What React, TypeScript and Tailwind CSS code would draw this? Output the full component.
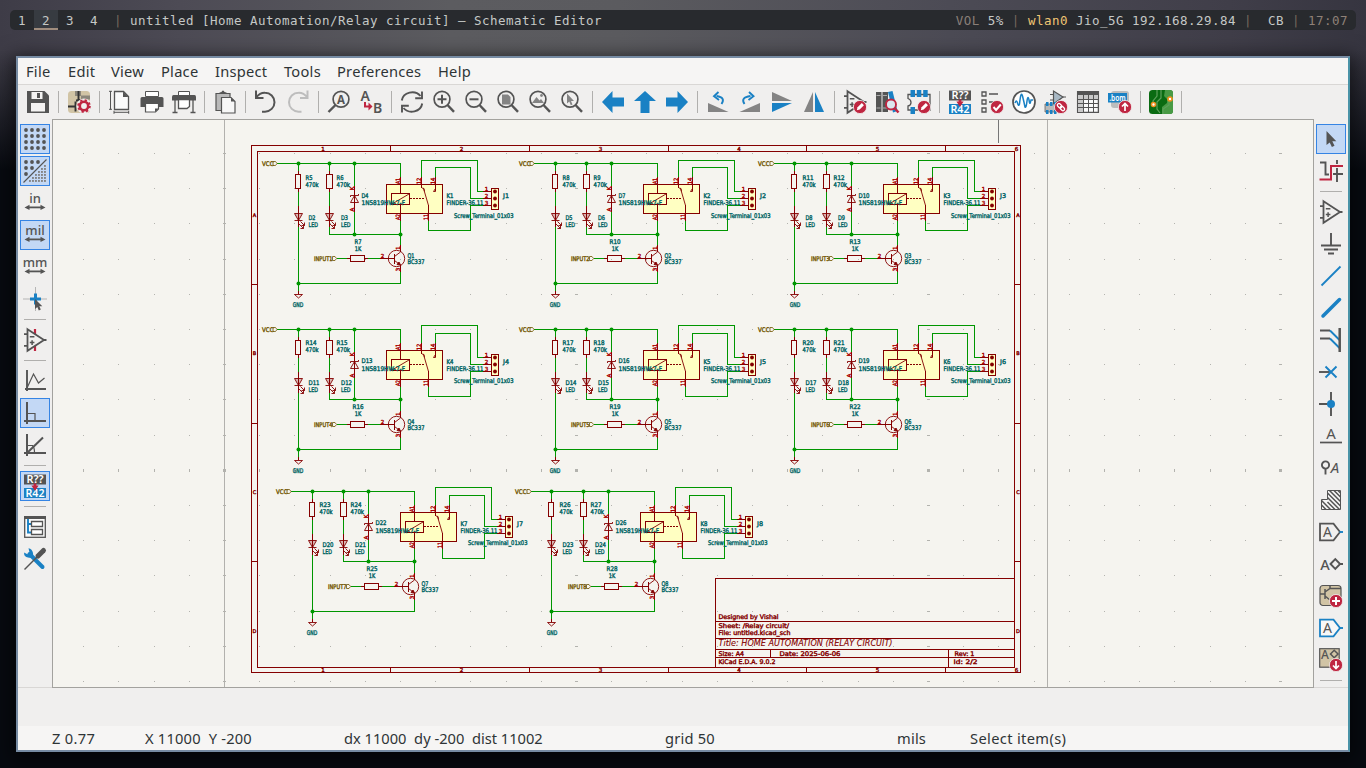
import React from "react";

const G = "#545454";
const LG = "#848484";
const B = "#1a81c4";
const R = "#bf2641";

type IconMap = Record<string, React.ReactNode>;

const lens = (
  <>
    <circle cx="10" cy="9.3" r="7.9" fill="none" stroke={G} strokeWidth="1.7" />
    <path d="M15.5 15 L22 21.8" stroke={G} strokeWidth="2.4" />
  </>
);

const badge = <circle cx="17" cy="17" r="6.6" fill={R} stroke="#f0efee" strokeWidth="0.8" />;
const pencil = <path d="M13.8 20.2 L14.6 17.3 L18.8 13.1 L20.9 15.2 L16.7 19.4 Z" fill="#fff" />;

const annotate = (
  <>
    <rect x="1" y="0.5" width="22" height="10" fill={G} />
    <text x="12" y="9" textAnchor="middle" fontSize="10" fontWeight="600" fill="#fff" textLength="17" lengthAdjust="spacingAndGlyphs">R??</text>
    <rect x="1" y="14" width="22" height="10" fill={B} />
    <text x="12" y="22.7" textAnchor="middle" fontSize="10" fontWeight="600" fill="#fff" textLength="19" lengthAdjust="spacingAndGlyphs">R42</text>
    <path d="M10.6 9.5h2.8v2h2.2L12 17 8.4 11.5h2.2z" fill={R} />
  </>
);

const opamp = (
  <>
    <path d="M4.5 1.2 L21 12 L4.5 22.8 Z M1 6.2h3.5 M1 17.8h3.5 M21 12h2.5" fill="none" stroke={G} strokeWidth="1.8" />
    <path d="M6.8 8.7h4.6 M6.8 14.6h4.6 M9.1 12.3v4.6" stroke={G} strokeWidth="1.5" />
  </>
);

const unit = (t: string) => (
  <>
    <text x="12" y="11.8" textAnchor="middle" fontSize="13" fontWeight="500" fill={G}>{t}</text>
    <path d="M4 16.4h16" stroke={G} strokeWidth="1.8" />
    <path d="M1.5 16.4l5-2.6v5.2zM22.500 16.4l-5-2.6v5.2z" fill={G} />
  </>
);

const hatch = "M2.500 12.500l9 9 M2.500 17l4.500 4.500 M8.500 14l7.500 7.500 M8.500 9.500l12 12 M8.500 5l13 13 M10.500 2.500l11 11 M15 2.500l6.500 6.500 M19 2.500l2.500 2.500";

const ICONS: IconMap = {
  save: (
    <>
      <path d="M1 1h17.500l4.500 4.500V23H1z" fill={G} />
      <path d="M5.500 2h11v7h-11z M5 13h14v8.500H5z" fill="#f4f3f2" />
      <path d="M11 3h3v5h-3z" fill={G} />
    </>
  ),
  setup: (
    <>
      <rect x="1" y="1" width="22" height="22" rx="3.500" fill="#d1c4a5" />
      <path d="M8 1h6v5H8z" fill="#8b867a" />
      <path d="M14 5.500h9v4h-9z" fill="#8b867a" />
      <path d="M1 16.500h8 M8.500 11.500v10 M9 10.500l8-.5 M11.500 10V1" stroke="#333" strokeWidth="1.900" />
      <circle cx="17" cy="16" r="7.600" fill="#f0efee" />
      <circle cx="17" cy="16" r="4.200" fill="none" stroke={R} strokeWidth="2.600" />
      <circle cx="17" cy="16" r="5.900" fill="none" stroke={R} strokeWidth="1.800" strokeDasharray="2.300 2.330" />
    </>
  ),
  page: (
    <>
      <path d="M6.500 1.500h9l5 5v13h-14z" fill="#fafafa" stroke={G} strokeWidth="1.300" />
      <path d="M15 1.500v5.500h5.500z" fill={G} />
      <path d="M2.500 1v18.500 M1 1.300h3 M1 19.300h3 M6 22.300h15 M6 20.800v3 M20.700 20.800v3" stroke={G} />
    </>
  ),
  print: (
    <>
      <path d="M5.500 1.500h13v5h-13z" fill="#fff" stroke={G} />
      <path d="M2 7h20q1.500 0 1.500 1.500V17H19v-4H5v4H.5V8.500Q.5 7 2 7z" fill={G} />
      <path d="M5.500 13.500h13v5.500l-3 3h-10z" fill="#fff" stroke={G} strokeWidth="1.200" />
      <path d="M15 22v-3.500h3.500z" fill={G} />
    </>
  ),
  plot: (
    <>
      <path d="M6.500 1.500h11v4h-11z" fill="#fff" stroke={G} />
      <path d="M1.500 5h21q1.500 0 1.500 2v3.500H0V7q0-2 1.500-2z" fill={G} />
      <path d="M3 10v12 M21 10v12 M.5 22.500h5 M18.500 22.500h5" stroke={G} strokeWidth="1.300" />
      <path d="M6.500 9.500h11v7l-2.500 2h-8.500z" fill="#fff" stroke={G} strokeWidth="1.300" />
    </>
  ),
  paste: (
    <>
      <path d="M3 3.500h14v17H3z" fill="#b9b9b9" stroke={G} strokeWidth="1.200" />
      <path d="M6 3.500q0-1.500 2.500-1.500 .5-1.500 1.500-1.500t1.500 1.500q2.500 0 2.500 1.500z" fill={G} />
      <path d="M8.500 7.500h9.500l4 4v11.500H8.500z" fill="#f7f7f7" stroke={G} strokeWidth="1.200" />
      <path d="M18 7.500v4h4z" fill={G} />
    </>
  ),
  undo: <path d="M2 .5v7.500h7.500 M2 7.500Q6 2.500 11 2.700a9.500 9.500 0 0 1 0 19H8" fill="none" stroke={G} strokeWidth="2" />,
  redo: <path d="M21.500 .5v7.500h-7.500 M21.500 7.500Q17.500 2.500 12.500 2.700a9.500 9.500 0 0 0 0 19H15.500" fill="none" stroke="#bdbdbd" strokeWidth="2" />,
  find: (
    <>
      <circle cx="14" cy="9.300" r="7.900" fill="none" stroke={G} strokeWidth="1.700" />
      <path d="M8.500 15 L1.500 22" stroke={G} strokeWidth="2.400" />
      <text x="14" y="13.500" textAnchor="middle" fontSize="11.500" fontWeight="700" fill={G}>A</text>
    </>
  ),
  replace: (
    <>
      <text x="6.300" y="10.500" textAnchor="middle" fontSize="14" fontWeight="600" fill={G}>A</text>
      <text x="18.500" y="22.500" textAnchor="middle" fontSize="14" fontWeight="600" fill={G}>B</text>
      <path d="M6 12v4.500h5" fill="none" stroke={R} strokeWidth="2" />
      <path d="M9.500 12.500l4 4-4 4z" fill={R} />
    </>
  ),
  refresh: (
    <>
      <path d="M1.800 10.500A10.500 9.500 0 0 1 20.500 6 M22.200 13.500A10.500 9.500 0 0 1 3.500 18" fill="none" stroke={G} strokeWidth="1.900" />
      <path d="M22 1.500v6.800h-6.800 M2 22.500v-6.800h6.800" fill="none" stroke={G} strokeWidth="1.900" />
    </>
  ),
  zin: <>{lens}<path d="M5.500 9.300h9 M10 4.800v9" stroke={G} strokeWidth="2" /></>,
  zout: <>{lens}<path d="M5.500 9.300h9" stroke={G} strokeWidth="2" /></>,
  zfit: <>{lens}<path d="M6 4.500h6l2.500 2.500v7.500H6z" fill={LG} /></>,
  zobj: <>{lens}<path d="M4 13l4.500-6 3 3.500 1.500-1.500 3 4z" fill={LG} /><circle cx="13.500" cy="5.500" r="1.400" fill={LG} /></>,
  zsel: <>{lens}<path d="M7 3.500v10l2.300-2 1.500 3.700 1.700-.7-1.500-3.500h3z" fill={LG} /></>,
  left: <path d="M1 12L11.500 1v6.500H23v9H11.500V23z" fill={B} />,
  up: <path d="M12 1l11 10h-6.500v12h-9V11H1z" fill={B} />,
  right: <path d="M23 12L12.500 1v6.500H1v9h11.500V23z" fill={B} />,
  ccw: (
    <>
      <path d="M2 13v9h20.500z" fill={LG} />
      <path d="M15.500 14q4.500-6.500-5-8" fill="none" stroke={B} strokeWidth="1.900" />
      <path d="M12.500 2L8 6.200l5 3.800" fill="none" stroke={B} strokeWidth="1.900" />
    </>
  ),
  cw: (
    <>
      <path d="M22 13v9H1.500z" fill={LG} />
      <path d="M6.500 14q-4.500-6.500 6-8" fill="none" stroke={B} strokeWidth="1.900" />
      <path d="M11 2l4.500 4.200-5 3.800" fill="none" stroke={B} strokeWidth="1.900" />
    </>
  ),
  mv: <><path d="M2 2l20 9H2z" fill={LG} /><path d="M2 22l20-9H2z" fill={B} /></>,
  mh: <><path d="M11 2L2 22h9z" fill={LG} /><path d="M13 2l9 20h-9z" fill={B} /></>,
  symed: <>{opamp}{badge}{pencil}</>,
  lib: (
    <>
      <path d="M1 2h5.500v20H1z M7.500 2h5.500v20H7.500z" fill={G} />
      <path d="M1.500 5.500h4 M1.500 18h4 M8 5.500h4 M8 18h4" stroke="#aaa" />
      <path d="M13 2l4.500-1 5 20-4.500 1.500z" fill={B} />
      <circle cx="16" cy="14.500" r="5" fill="#dbe6ee" stroke={R} strokeWidth="1.900" />
      <path d="M19.500 18l4 4.500" stroke={R} strokeWidth="2.500" />
    </>
  ),
  fped: (
    <>
      <path d="M1 4.500h22v15.500H1v-4q3-.5 3-3.500T1 8.500z" fill="none" stroke={G} strokeWidth="1.300" />
      <path d="M3.500 0h4.500v7H3.500z M9.800 0h4.500v7H9.800z M16.200 0h4.500v7h-4.500z M3.500 17h4.500v7H3.500z" fill={B} />
      {badge}{pencil}
    </>
  ),
  annot: annotate,
  erc: (
    <>
      <path d="M2 2h4v4H2z M2 10h4v4H2z M2 18h4v4H2z M9 4h9 M9 12h5" fill="none" stroke={G} strokeWidth="1.300" />
      {badge}<path d="M13.500 17l2.600 3 4.700-5.500" fill="none" stroke="#fff" strokeWidth="2" />
    </>
  ),
  sim: (
    <>
      <circle cx="12" cy="12" r="11" fill="#fff" stroke={G} strokeWidth="1.700" />
      <path d="M3 13q1.500-4 2.500 0 1 4 2 1 1.500-14 3-8t2.500 11q1.200 1.500 2-6 1-7 2.200 0 .8 5 1.800-1h2" fill="none" stroke={B} strokeWidth="1.500" />
    </>
  ),
  assign: (
    <>
      <path d="M9.500 1v13L19 7z" fill="#a8b8c4" stroke={G} strokeWidth="1.200" />
      <path d="M6 4.500h3 M6 10h3 M19 7h3" stroke={G} />
      <path d="M1 14h13v8H1z" fill="#b9b9b9" stroke={G} strokeWidth=".7" />
      <path d="M2 12h2.500v4H2z M6 12h2.500v4H6z M10 12h2.500v4H10z M2 20h2.500v4H2z M6 20h2.500v4H6z M10 20h2.500v4H10z" fill={B} />
      {badge}
      <g transform="rotate(45 17 17)" fill="none" stroke="#fff" strokeWidth="1.300">
        <rect x="12.600" y="15.500" width="5" height="3.200" rx="1.600" />
        <rect x="16.500" y="15.500" width="5" height="3.200" rx="1.600" />
      </g>
    </>
  ),
  table: (
    <>
      <path d="M1.600 1.600h20.800v20.800H1.600z" fill="#fafafa" stroke={G} strokeWidth="1.300" />
      <path d="M2 5h20v4.500H2z M2 5h5.500v17H2z" fill="#c9c9c9" />
      <path d="M1.500 1.500h21v3.500h-21z" fill={G} />
      <path d="M2 9.500h20 M2 13.500h20 M2 17.500h20 M7.500 5v17 M12.500 5v17 M17.500 5v17" stroke={G} shapeRendering="crispEdges" />
    </>
  ),
  bom: (
    <>
      <rect x="3" y="1" width="18" height="17" rx="3" fill="#bdbdbd" />
      <path d="M0 3h19v9.500H0z" fill={B} />
      <text x="9.500" y="10.800" textAnchor="middle" fontSize="8.500" fontWeight="600" fill="#fff" textLength="16.500" lengthAdjust="spacingAndGlyphs">.bom</text>
      {badge}<path d="M17 21v-7 M14 16.500l3-3 3 3" fill="none" stroke="#fff" strokeWidth="1.700" />
    </>
  ),
  pcb: (
    <>
      <rect x="0" y="0" width="24" height="24" rx="3.500" fill="#0a6b12" />
      <path d="M16 0h5q3 0 3 3v18q0 3-3 3h-8v-7l5-4V9l-3-3z" fill="#489a45" />
      <path d="M8 0v6l-4 5v4 M12 0v8l-4 4v7l3 4 M20 10v5l-6 4v5" fill="none" stroke="#5ca05a" strokeWidth="1.200" />
      <circle cx="21" cy="9" r="2" fill="#fff" stroke="#f0901e" strokeWidth="1.600" />
      <circle cx="4.500" cy="14.500" r="2" fill="#fff" stroke="#f0901e" strokeWidth="1.600" />
    </>
  ),
  grid: <>{[3, 9, 15, 21].map((y) => [3, 9, 15, 21].map((x) => <circle key={`${x}-${y}`} cx={x} cy={y} r="1.900" fill={G} />))}</>,
  gridov: (
    <>
      {[[3, 3], [9, 3], [15, 3], [3, 9], [9, 9], [3, 15]].map(([x, y]) => <circle key={`${x}-${y}`} cx={x} cy={y} r="1.900" fill={G} />)}
      {[7, 10, 13, 16, 19, 22].map((y, r) =>
        [22, 19, 16, 13, 10, 7].slice(0, r + 1).map((x) => <rect key={`${x}-${y}`} x={x - 1} y={y - 1} width="1.900" height="1.900" fill={LG} />)
      )}
      <path d="M.5 23.500L23.500.5" stroke={G} strokeWidth="1.100" />
    </>
  ),
  in: unit("in"),
  mil: unit("mil"),
  mm: unit("mm"),
  cursor: (
    <>
      <path d="M12.500 0v24 M0 12h24" stroke="#b5b5b5" />
      <path d="M12.500 6.500v11 M7 12h11" stroke={B} strokeWidth="3" />
      <path d="M12 12v10l2.300-2 1.500 3.500 2-1-1.500-3.300h3z" fill={G} />
    </>
  ),
  hidden: <><path d="M12 1v5 M12 18v5" stroke={R} strokeWidth="2.200" />{opamp}</>,
  free: (
    <>
      <path d="M4 1v21 M2 20h21" stroke={G} strokeWidth="1.900" />
      <path d="M4 19l6.500-14 5 9 6-5" fill="none" stroke={G} strokeWidth="1.200" />
    </>
  ),
  ortho: (
    <>
      <path d="M4 1v22 M1 20h22" stroke={G} strokeWidth="2" />
      <path d="M4.500 12.500h7.500v7.500" fill="none" stroke={G} strokeWidth="1.200" />
    </>
  ),
  diag: (
    <>
      <path d="M4 1v22 M1 20h22" stroke={G} strokeWidth="2" />
      <path d="M4.500 12.500h5q2 2 2 7" fill="none" stroke={G} strokeWidth="1.200" />
      <path d="M3 21L20 4.500" stroke={G} strokeWidth="2" />
    </>
  ),
  tree: (
    <>
      <rect x="1.700" y="1.700" width="20.600" height="20.600" fill="#fafafa" stroke={G} strokeWidth="1.300" />
      <path d="M1 1h22v3H1z" fill={G} />
      <path d="M5 4v13.500h3 M5 9h3" fill="none" stroke={B} strokeWidth="1.900" />
      <path d="M8.500 6.500h11v5h-11z M8.500 14.500h11v5h-11z" fill="#fff" stroke={G} strokeWidth="1.300" />
    </>
  ),
  tools: (
    <>
      <path d="M6.500 7L19.500 20" stroke={B} strokeWidth="4" strokeLinecap="round" />
      <path d="M5.500 1.200l1 4.300-2 1.800L1 5.500Q1 10 5 10.500q6 1.500 5-4.500-.8-4-4.500-4.800z" fill={B} />
      <path d="M1.500 22.500L15 9" stroke={G} strokeWidth="1.400" />
      <path d="M15 9L20.500 3.500" stroke={G} strokeWidth="5" strokeLinecap="round" />
    </>
  ),
  arrow: <path d="M7.500 4v14l3.200-2.600 2.200 4.600 2.600-1.300-2.200-4.400h4z" fill={G} />,
  hilite: (
    <>
      <path d="M1 3.500h5.500v12h5 M13 15h11 M18 1v22" fill="none" stroke={G} strokeWidth="1.900" />
      <path d="M.5 20h11.500v-13H24" fill="none" stroke="#f0efee" strokeWidth="4" />
      <path d="M.5 20.500h11.500V7H24" fill="none" stroke={R} strokeWidth="2" />
    </>
  ),
  opamp,
  gnd: <path d="M12 1v12 M2 13.500h20 M5 17.500h14 M9 21.500h6" stroke={G} strokeWidth="1.900" />,
  wire: <path d="M2.500 21.500L21.500 2.500" stroke={B} strokeWidth="1.800" />,
  bus: <path d="M4 20L20.500 3.500" stroke={B} strokeWidth="3.500" strokeLinecap="round" />,
  entry: (
    <>
      <path d="M1 2.500h10 M1 10.500h10" stroke={G} strokeWidth="1.900" />
      <path d="M11 2.500l9.500 9.500 M11 10.500l9.500 9.500" stroke={B} strokeWidth="1.900" />
      <path d="M20.700 0v24" stroke={G} strokeWidth="2.500" />
    </>
  ),
  noconn: <><path d="M0 12h11" stroke={G} strokeWidth="1.900" /><path d="M6.500 6.500l11 11 M17.500 6.500l-11 11" stroke={B} strokeWidth="1.900" /></>,
  junction: <><path d="M0 12h12 M12 0v24" stroke={G} strokeWidth="1.900" /><circle cx="12" cy="12" r="4" fill={B} /></>,
  label: <><text x="12" y="14.500" textAnchor="middle" fontSize="15" fill={G}>A</text><path d="M1 18.500h22" stroke={G} strokeWidth="1.700" /></>,
  cls: (
    <>
      <circle cx="6.500" cy="9" r="3.600" fill="none" stroke={G} strokeWidth="1.900" />
      <path d="M6.500 12.500v6" stroke={G} strokeWidth="1.900" />
      <text x="16" y="16.500" textAnchor="middle" fontSize="15" fontStyle="italic" fill={G}>A</text>
    </>
  ),
  rule: (
    <>
      <path d="M8.500 2.500h13v19h-19v-10h6z" fill="#f7f7f7" />
      <clipPath id="zone"><path d="M8.500 2.500h13v19h-19v-10h6z" /></clipPath>
      <path d={hatch} stroke={G} strokeWidth="1.500" clipPath="url(#zone)" />
      <path d="M8.500 2.500h13v19h-19v-10h6z" fill="none" stroke={G} />
    </>
  ),
  glabel: (
    <>
      <path d="M1 3.700h13.500l6.500 8.300-6.500 8.300H1z" fill="none" stroke={G} strokeWidth="1.800" />
      <path d="M20.500 12h3.500" stroke={B} strokeWidth="1.900" />
      <text x="8.500" y="17" textAnchor="middle" fontSize="14" fill={G}>A</text>
    </>
  ),
  hlabel: (
    <>
      <text x="6" y="17.500" textAnchor="middle" fontSize="14.500" fontWeight="500" fill={G}>A</text>
      <path d="M11.500 12l4.800-5 4.800 5-4.800 5z M21 12h3" fill="none" stroke={G} strokeWidth="1.900" />
    </>
  ),
  sheet: (
    <>
      <rect x="1" y="1.500" width="21" height="20" rx="3" fill="#d1c4a5" stroke={G} strokeWidth="1.200" />
      <path d="M1 10h5 M6 5v10 M6 8l5-3.500h11 M6 12l5 4 M11 1v4" fill="none" stroke={G} strokeWidth="1.500" />
      {badge}<path d="M13 17h8 M17 13v8" stroke="#fff" strokeWidth="2" />
    </>
  ),
  slabel: (
    <>
      <path d="M1 3.700h13.500l6.500 8.300-6.500 8.300H1z" fill="#f7f7f7" stroke={B} strokeWidth="1.800" />
      <path d="M20.500 12h3.500" stroke={B} strokeWidth="1.900" />
      <text x="8.500" y="17" textAnchor="middle" fontSize="14" fill={G}>A</text>
    </>
  ),
  imp: (
    <>
      <rect x="0.700" y="0.700" width="19.500" height="18.500" fill="#d1c4a5" stroke={G} strokeWidth="1.200" />
      <text x="6" y="11" textAnchor="middle" fontSize="12" fontWeight="500" fill={G}>A</text>
      <path d="M11.500 6l3.700-3.700L19 6l-3.800 3.700z" fill="none" stroke={G} strokeWidth="1.500" />
      {badge}<path d="M17 13v7 M14 17.500l3 3 3-3" fill="none" stroke="#fff" strokeWidth="1.700" />
    </>
  ),
};

function Icon({ name }: { name: string }) {
  return (
    <svg width="24" height="24" viewBox="0 0 24 24" className="shrink-0 overflow-visible font-['Noto_Sans',sans-serif] tracking-normal">
      {ICONS[name]}
    </svg>
  );
}

const TOP = "save | setup | page print plot | paste | undo redo | find replace | refresh zin zout zfit zobj zsel | left up right | ccw cw mv mh | symed lib fped | annot erc sim assign table bom | pcb |".split(" ");
const LEFT = "*grid *gridov in *mil mm cursor | hidden | free *ortho diag | *annot | tree tools".split(" ");
const RIGHT = "*arrow hilite | opamp gnd wire bus entry noconn junction label cls rule glabel hlabel sheet slabel imp |".split(" ");

function SideBar({ items }: { items: string[] }) {
  return (
    <div className="flex w-[34px] shrink-0 flex-col items-center pt-1">
      {items.map((n, i) =>
        n === "|" ? (
          <div key={i} className="flex h-[9px] shrink-0 items-center"><div className="h-px w-[22px] bg-[#b0afad]" /></div>
        ) : (
          <div key={i} className="flex h-8 w-8 shrink-0 items-center justify-center">
            <div className={n[0] === "*" ? "flex h-[30px] w-[30px] items-center justify-center border border-[#3584e4] bg-[#c3d8f5]" : "flex h-[30px] w-[30px] items-center justify-center"}>
              <Icon name={n.replace("*", "")} />
            </div>
          </div>
        )
      )}
    </div>
  );
}

interface TProps { x: number; y: number; w?: number; c?: string; a?: "start" | "middle"; r?: boolean; s?: number; children: string }
function T({ x, y, w, c = "#006464", a = "start", r, s = 6.4, children }: TProps) {
  return (
    <text
      x={x} y={y + s * 0.36} fill={c} stroke={c} strokeWidth="0.4" fontSize={s} textAnchor={a}
      textLength={w} lengthAdjust="spacingAndGlyphs" transform={r ? `rotate(-90 ${x} ${y})` : undefined}
    >
      {children}
    </text>
  );
}

interface Block { dx: number; dy: number; n: number; r: [string, string, string]; d: [string, string, string] }
const BLOCKS: Block[] = [
  { dx: 0, dy: 0, n: 1, r: ["R5", "R6", "R7"], d: ["D2", "D3", "D4"] },
  { dx: 257, dy: 0, n: 2, r: ["R8", "R9", "R10"], d: ["D5", "D6", "D7"] },
  { dx: 496.5, dy: 0, n: 3, r: ["R11", "R12", "R13"], d: ["D8", "D9", "D10"] },
  { dx: 0, dy: 166, n: 4, r: ["R14", "R15", "R16"], d: ["D11", "D12", "D13"] },
  { dx: 257, dy: 166, n: 5, r: ["R17", "R18", "R19"], d: ["D14", "D15", "D16"] },
  { dx: 496.5, dy: 166, n: 6, r: ["R20", "R21", "R22"], d: ["D17", "D18", "D19"] },
  { dx: 14, dy: 328, n: 7, r: ["R23", "R24", "R25"], d: ["D20", "D21", "D22"] },
  { dx: 253.5, dy: 328, n: 8, r: ["R26", "R27", "R28"], d: ["D23", "D24", "D26"] },
];

const PIN = "#a90000";
const DR = "#840000";
const LBL = "#725600";

function Circuit({ dx, dy, n, r, d }: Block) {
  const m = dy > 0 ? 1 : 0;
  // Columns off the pixel grid: left rail rounds down, everything else rounds up.
  const left = Math.floor(dx);
  const base = Math.ceil(dx);
  const k = left - base;
  const rail = 298.5 + k;
  const coil = 400.5;
  const led = (x: number) => (
    <g key={x} transform={`translate(0 ${-m})`}>
      <path d={`M${x - 4} 213.500h8l-4 7z M${x - 4} 220.500h8`} fill={DR} fillOpacity="0.25" />
      <path d={`M${x + 2} 221.500l4 4v-3m0 3h-3 M${x} 223.500l5 5v-3m0 3h-3`} />
    </g>
  );
  const rw = (s: string) => (s.length > 2 ? 11 : 7);
  return (
    <g transform={`translate(${base} ${dy})`}>
      <g shapeRendering="crispEdges" fill="#ffffc2" stroke={DR}>
        <path d="M386.500 184.500h56v29h-56z M491.500 188.500h7v21h-7z" />
      </g>
      <g shapeRendering="crispEdges" fill="none" stroke="#009600">
        <path d={`M277 163.500H${coil}V178 M${rail} 163.500V172 M${rail} 191V207 M${rail} 227V292 M329.500 163.500V172 M329.500 191V207 M329.500 226V${234.5 - m}H${coil} M354.500 163.500V186 M354.500 212V${234.5 - m} M${coil} 219V247 M${coil} 271V283.500H${rail}`} />
        <path d={`M421.500 178V${160.5 - m}H477.500V191.500H483 M435.500 178V167.500H470.500V198.500H483 M428.500 220V230.500H470.500V205.500H483 M336.500 258.500H347 M368 258.500H380`} />
      </g>
      <g fill="#009600">
        {[[rail, 163.5], [329.5, 163.5], [354.5, 163.5], [354.5, 234.5 - m], [400.5, 234.5 - m], [rail, 283.5]].map(([x, y]) => (
          <circle key={`${x}-${y}`} cx={x} cy={y} r="2" />
        ))}
      </g>
      <g shapeRendering="crispEdges" fill="none" stroke={DR}>
        <path d={`M${rail - 3} 174.500h5v14h-5z M326.500 174.500h6v14h-6z M350.500 255.500h14v6h-14z M391.500 193.500h18v11h-18z`} />
        <path d={`M${rail} 171v3 M${rail} 189v3 M329.500 171v3 M329.500 189v3 M${rail} 206v21 M329.500 206v21 M354.500 186v26 M400.500 177v16 M400.500 205v16 M421.500 177v11 M435.500 177v14 M428.500 205v16 M347 258.500h3 M365 258.500h3 M380 258.500h14 M400.500 245v7 M400.500 265v7 M483 191.500h8 M483 198.500h8 M483 205.500h8 M${rail} 291v3`} />
        <path d="M410 198.500h15" strokeDasharray="2 1" />
        <path d="M394.500 253.500v10" strokeWidth="1.300" />
      </g>
      <g fill="none" stroke={DR} strokeWidth="0.9">
        <path d="M392 204L409 194 M423.500 188.500L428.500 205.500 M422 188l2 .5.5 3 M433.500 191.500l2-3v3z M350.500 202.500h8l-4-7z M350.500 197v-1.500h8V194" />
        <circle cx="396.500" cy="258.500" r="8.200" />
        <path d={`M394.500 256.500L400.500 252 M394.500 260.500L400.500 265 M${rail} 298l-4-3.500h8z`} />
        <path d="M400.500 265l-3.500-.5 2-2.500z" fill={DR} />
        {led(rail)}
        {led(329.5)}
      </g>
      <g fill={DR}>
        <circle cx="495" cy="191.500" r="1.900" /><circle cx="495" cy="198.500" r="1.900" /><circle cx="495" cy="205.500" r="1.900" />
      </g>
      <T x={262 + k} y={163.500} w={11.500} c={LBL}>VCC</T>
      <path d="M273 161.500h2.500l1.500 2-1.500 2H273z M332.500 256.500h2.500l1.500 2-1.500 2h-2.500z" fill="none" stroke={LBL} strokeWidth="0.8" />
      <T x={314} y={258.500} w={18.500} c={LBL}>{`INPUT${n}`}</T>
      <T x={305.500} y={178 - m} w={rw(r[0])}>{r[0]}</T>
      <T x={305.500} y={185 - m} w={13}>470k</T>
      <T x={336.500} y={178 - m} w={rw(r[1])}>{r[1]}</T>
      <T x={336.500} y={185 - m} w={13.500}>470k</T>
      <T x={308.500} y={217.500 - m} w={rw(d[0])}>{d[0]}</T>
      <T x={308.500} y={224.500 - m} w={9.500}>LED</T>
      <T x={341} y={217.500 - m} w={rw(d[1])}>{d[1]}</T>
      <T x={341} y={224.500 - m} w={9.500}>LED</T>
      <T x={361.500} y={195.500 - m} w={rw(d[2])}>{d[2]}</T>
      <T x={361.500} y={202.500} w={43.500}>1N5819HW-7-F</T>
      <T x={446.500} y={195.500} w={7}>{`K${n}`}</T>
      <T x={446.500} y={202.500} w={37}>FINDER-36.11</T>
      <T x={454} y={215.500 - m} w={59.500}>Screw_Terminal_01x03</T>
      <T x={503} y={195.500} w={6}>{`J${n}`}</T>
      <T x={358} y={241.500 - m} w={rw(r[2])} a="middle">{r[2]}</T>
      <T x={358} y={248.500 - m} w={6.500} a="middle">1K</T>
      <T x={407.500} y={255.500} w={7}>{`Q${n}`}</T>
      <T x={407.500} y={262} w={17}>BC337</T>
      <T x={298} y={304.500} w={10.500} a="middle">GND</T>
      <g>
        <T x={397.500} y={181} w={6} s={5.800} r a="middle" c={PIN}>A1</T>
        <T x={397.500} y={217} w={6} s={5.800} r a="middle" c={PIN}>A2</T>
        <T x={418.500} y={181} w={6.500} s={5.800} r a="middle" c={PIN}>12</T>
        <T x={432.500} y={181} w={6.500} s={5.800} r a="middle" c={PIN}>14</T>
        <T x={425.500} y={217} w={6} s={5.800} r a="middle" c={PIN}>11</T>
        <T x={352} y={188.500} s={5.500} r a="middle" c={PIN}>K</T>
        <T x={352} y={209.500} s={5.500} r a="middle" c={PIN}>A</T>
        <T x={397.700} y={248} s={5.500} r a="middle" c={PIN}>1</T>
        <T x={397.700} y={269.500} s={5.500} r a="middle" c={PIN}>3</T>
        <T x={382.500} y={256} s={5.500} a="middle" c={PIN}>2</T>
        <T x={486.500} y={189} s={5.500} a="middle" c={PIN}>1</T>
        <T x={486.500} y={196} s={5.500} a="middle" c={PIN}>2</T>
        <T x={486.500} y={203} s={5.500} a="middle" c={PIN}>3</T>
      </g>
    </g>
  );
}

function Canvas() {
  const xs = Array.from({ length: 36 }, (_, i) => i - 4);
  const ys = Array.from({ length: 16 }, (_, i) => i + 1);
  return (
    <svg width="1260" height="567" viewBox="53 120 1260 567" className="block font-['DejaVu_Sans',sans-serif] tracking-normal">
      <rect x="53" y="120" width="1260" height="567" fill="#f5f4ef" />
      <g fill="#b3b3ae" shapeRendering="crispEdges">
        {ys.map((j) => xs.map((i) => {
          const x = Math.floor(224.4 + 35.2 * i), y = Math.floor(118.2 + 35.2 * j);
          const mx = i % 10 === 0, my = j % 10 === 0;
          return <rect key={`${i}-${j}`} x={mx ? x - 1 : x} y={my ? y - 1 : y} width={mx ? 3 : 1} height={my ? 3 : 1} />;
        }))}
      </g>
      <path d="M224.500 120V687 M1047.500 120V687" stroke="#b2b1ad" shapeRendering="crispEdges" />
      <path d="M998.500 120V143" stroke="#777" shapeRendering="crispEdges" />
      <g fill="none" stroke={DR} shapeRendering="crispEdges">
        <path d="M251.500 145.500H1020.500V672.500H251.500z M257.500 151.500H1014.500V667.500H257.500z" />
        {[390.5, 529.5, 668.5, 806.5, 945.5].map((x) => <path key={x} d={`M${x} 145.500v6 M${x} 667.500v5`} />)}
        {[284.5, 423.5, 561.5].map((y) => <path key={y} d={`M251.500 ${y}h6 M1014.500 ${y}h6`} />)}
        <path d="M715.500 667.500V578.500H1014.500 M715.500 621.500H1014.500 M715.500 638.500H1014.500 M715.500 649.500H1014.500 M715.500 657.500H1014.500 M770.500 649.500V657.500 M948.500 649.500V667.500" />
      </g>
      {[323, 461.5, 600.5, 739, 877.5, 1016.5].map((x, i) => (
        <g key={x}>
          <T x={x} y={148.700} s={5.500} a="middle" c={DR}>{String(i + 1)}</T>
          <T x={x} y={670.200} s={5.500} a="middle" c={DR}>{String(i + 1)}</T>
        </g>
      ))}
      {["A", "B", "C", "D"].map((l, i) => (
        <g key={l}>
          <T x={254.500} y={215 + i * 138.600} s={5} a="middle" c={DR}>{l}</T>
          <T x={1018} y={215 + i * 138.600} s={5} a="middle" c={DR}>{l}</T>
        </g>
      ))}
      <T x={718.500} y={617} w={60} c={DR}>Designed by Vishal</T>
      <T x={718.500} y={625.500} w={70.500} c={DR}>Sheet: /Relay circuit/</T>
      <T x={718.500} y={633} w={72} c={DR}>File: untitled.kicad_sch</T>
      <text x="718.500" y="645.900" fontSize="8" fontStyle="italic" fill={DR} stroke={DR} strokeWidth="0.1" textLength="174" lengthAdjust="spacingAndGlyphs">
        Title: HOME AUTOMATION (RELAY CIRCUIT)
      </text>
      <T x={718.500} y={653.700} w={25.500} c={DR}>Size: A4</T>
      <T x={779.500} y={653.700} w={61} c={DR}>Date: 2025-06-06</T>
      <T x={954.500} y={653.700} w={20} c={DR}>Rev: 1</T>
      <T x={718.500} y={661.700} w={57} c={DR}>KiCad E.D.A. 9.0.2</T>
      <T x={953.500} y={661.700} w={24} c={DR}>Id: 2/2</T>
      {BLOCKS.map((b) => <Circuit key={b.n} {...b} />)}
    </svg>
  );
}

export default function App() {
  return (
    <div className="flex h-[768px] w-[1366px] flex-col overflow-hidden bg-[linear-gradient(180deg,transparent_0px,transparent_50px,#070a10_170px),linear-gradient(90deg,#3e3c47_0px,#4d4b55_180px,#5c5c60_450px,#5b5b5f_620px,#4c4b55_950px,#403e49_1230px,#363540_1366px)] pt-[10px] pl-[10px]">
      <div className="flex h-5 w-[1346px] shrink-0 overflow-hidden rounded-[5px] bg-[#282a2e] font-['DejaVu_Sans_Mono',monospace] text-[12.5px] leading-[22px] tracking-[0.475px] whitespace-pre text-[#c5c8c6]">
        <div className="w-6 text-center">1</div>
        <div className="w-6 border-b-2 border-[#a08d7e] bg-[#373b41] text-center">2</div>
        <div className="w-6 text-center">3</div>
        <div className="w-6 text-center">4</div>
        <div className="w-6 text-center text-[#75685e]">|</div>
        <div>untitled [Home Automation/Relay circuit] — Schematic Editor</div>
        <div className="ml-auto pr-2">
          <span className="text-[#8a7f78]">VOL</span> 5% <span className="text-[#75685e]">|</span> <span className="text-[#f0c674]">wlan0</span> Jio_5G 192.168.29.84 <span className="text-[#75685e]">|</span>{"  "}CB <span className="text-[#75685e]">|</span> <span className="text-[#8f8178]">17:07</span>
        </div>
      </div>

      <div className="mt-[26px] ml-1.5 flex h-[696px] w-[1334px] shrink-0 flex-col border-2 border-[#768ba3] border-r-[#4a93a7] bg-[#f0efee] font-['Noto_Sans',sans-serif] text-[14.67px] text-[#2e3436] shadow-[0_4px_18px_4px_rgba(0,0,0,0.55)]">
        <div className="flex h-[27px] shrink-0 border-b border-[#d9d7d5] bg-[#f6f5f4] pl-2 leading-[27px] tracking-[0.25px] whitespace-nowrap">
          <div className="w-[42px]">File</div>
          <div className="w-[43px]">Edit</div>
          <div className="w-[50px]">View</div>
          <div className="w-[54px]">Place</div>
          <div className="w-[69px]">Inspect</div>
          <div className="w-[53px]">Tools</div>
          <div className="w-[101px]">Preferences</div>
          <div>Help</div>
        </div>
        <div className="flex h-[34px] shrink-0 items-center pl-1">
          {TOP.map((n, i) =>
            n === "|" ? (
              <div key={i} className="flex w-[9px] shrink-0 justify-center"><div className="h-[22px] w-px bg-[#b0afad]" /></div>
            ) : (
              <div key={i} className="flex h-8 w-8 shrink-0 items-center justify-center"><Icon name={n} /></div>
            )
          )}
        </div>
        <div className="flex h-[569px] shrink-0 border-b border-[#d9d7d5]">
          <SideBar items={LEFT} />
          <div className="h-[569px] w-[1262px] shrink-0 border border-[#a3a29e]"><Canvas /></div>
          <SideBar items={RIGHT} />
        </div>
        <div className="h-[38px] shrink-0" />
        <div className="flex min-h-0 flex-1 bg-[#f6f5f4] pl-[34px] leading-6 whitespace-pre">
          <div className="w-[93px] tracking-[0.3px]">Z 0.77</div>
          <div className="w-[199px] tracking-[0.2px]">X 11000  Y -200</div>
          <div className="w-[321px]">dx 11000  dy -200  dist 11002</div>
          <div className="w-[232px] tracking-[0.2px]">grid 50</div>
          <div className="w-[73px] tracking-[0.2px]">mils</div>
          <div className="tracking-[0.35px]">Select item(s)</div>
        </div>
      </div>
    </div>
  );
}
